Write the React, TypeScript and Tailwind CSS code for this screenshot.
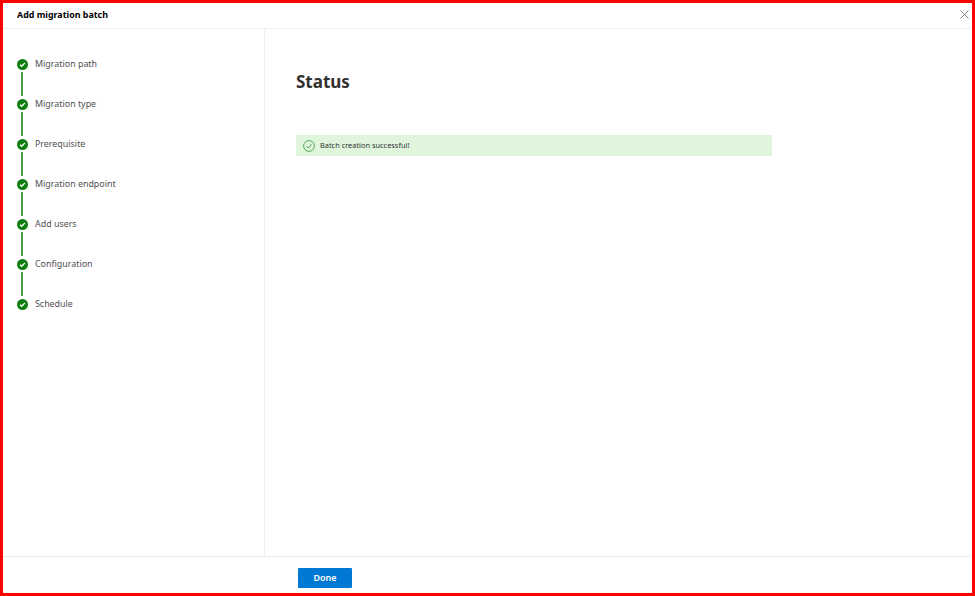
const steps = [
  'Migration path',
  'Migration type',
  'Prerequisite',
  'Migration endpoint',
  'Add users',
  'Configuration',
  'Schedule',
];

function StepIcon() {
  return (
    <svg viewBox="0 0 11 11" className="w-[11px] h-[11px] shrink-0">
      <circle cx="5.5" cy="5.5" r="5.5" fill="#107c10" />
      <path d="M3 5.7 L4.7 7.3 L8 3.9" fill="none" stroke="#fff" strokeWidth="1.3" />
    </svg>
  );
}

export default function App() {
  return (
    <div className="w-[975px] h-[596px] flex flex-col bg-white border-[3px] border-[#fe0000] font-['Noto_Sans',sans-serif] overflow-hidden">
      {/* Header */}
      <div className="h-[26px] shrink-0 flex items-center justify-between border-b border-[#f0f0f0] pl-[14px] pr-[3px]">
        <span className="text-[8.9px] font-bold text-black mb-[2px]">Add migration batch</span>
        <svg viewBox="0 0 9 9" className="w-[9px] h-[9px] mb-[3px]">
          <path d="M0.5 0.5 L8.5 8.5 M8.5 0.5 L0.5 8.5" stroke="#777" strokeWidth="0.9" />
        </svg>
      </div>

      <div className="flex flex-1 min-h-0">
        {/* Steps */}
        <div className="w-[262px] shrink-0 border-r border-[#eeeeee] pt-[29px] pl-[13.5px]">
          {steps.map((step, index) => (
            <div key={step}>
              <div className="flex items-center gap-[7.5px] h-[12px]">
                <StepIcon />
                <span className="text-[8.9px] leading-[12px] text-[#505050]">{step}</span>
              </div>
              {index < steps.length - 1 && (
                <div className="w-[2px] h-[24px] ml-[4.5px] my-[2px] bg-[#4b9a4b]" />
              )}
            </div>
          ))}
        </div>

        {/* Content */}
        <div className="flex-1 pl-[31px] pt-[41px]">
          <h1 className="text-[17px] leading-[24px] font-bold text-[#323130]">Status</h1>
          <div className="w-[476px] h-[21px] mt-[41px] flex items-center gap-[5px] pl-[7px] bg-[#dff6dd]">
            <svg viewBox="0 0 12 12" className="w-[12px] h-[12px] shrink-0">
              <circle cx="6" cy="6" r="5.4" fill="none" stroke="#4b9f4b" strokeWidth="0.9" />
              <path d="M3.5 6.2 L5.3 8 L8.6 4.3" fill="none" stroke="#3c8f3c" strokeWidth="0.9" />
            </svg>
            <span className="text-[7.4px] text-[#323130]">Batch creation successful!</span>
          </div>
        </div>
      </div>

      {/* Footer */}
      <div className="h-[37px] shrink-0 border-t border-[#eeeeee] pl-[295px] pt-[11px]">
        <button className="block w-[54px] h-[20px] rounded-[1px] bg-[#0078d4] text-white text-[9px] font-semibold">
          Done
        </button>
      </div>
    </div>
  );
}
